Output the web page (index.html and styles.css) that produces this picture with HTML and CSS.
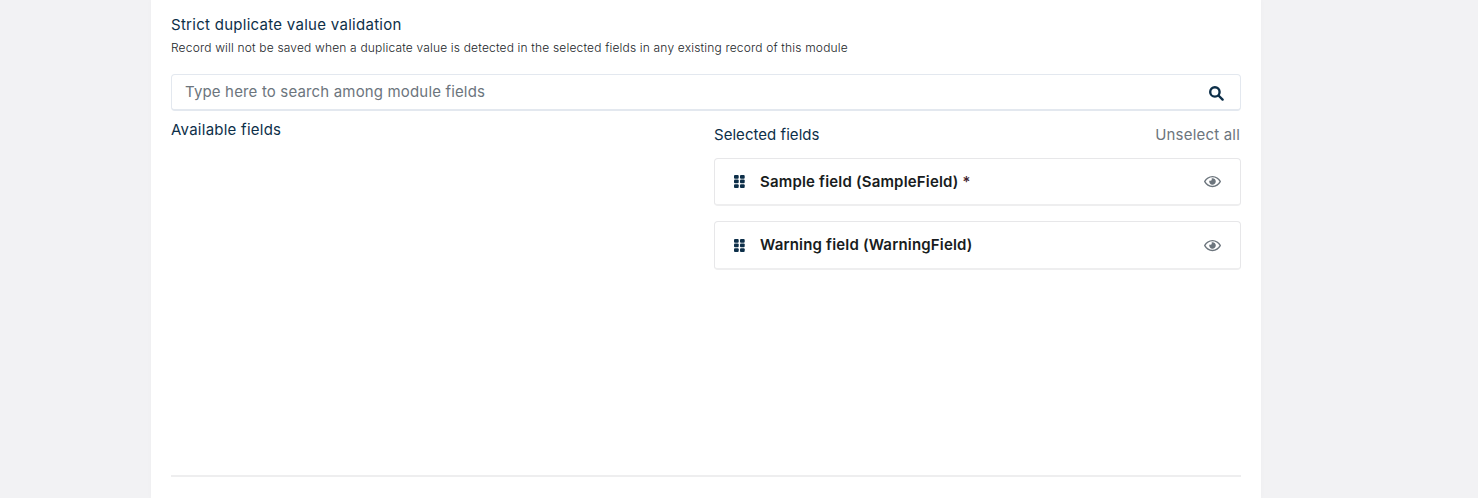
FILE: index.html
```html
<!DOCTYPE html>
<html lang="en">
<head>
<meta charset="utf-8">
<title>Strict duplicate value validation</title>
<link rel="stylesheet" href="styles.css">
</head>
<body>
<svg class="sprite" aria-hidden="true">
  <symbol id="grip" viewBox="0 0 11 13">
    <rect x="0" y="0" width="4.7" height="3.7" rx="1"/><rect x="6" y="0" width="4.7" height="3.7" rx="1"/>
    <rect x="0" y="4.6" width="4.7" height="3.7" rx="1"/><rect x="6" y="4.6" width="4.7" height="3.7" rx="1"/>
    <rect x="0" y="9.2" width="4.7" height="3.7" rx="1"/><rect x="6" y="9.2" width="4.7" height="3.7" rx="1"/>
  </symbol>
  <symbol id="eye" viewBox="0 0 576 512">
    <path d="M288 144a110.94 110.94 0 0 0-31.24 5 55.4 55.4 0 0 1 7.24 27 56 56 0 0 1-56 56 55.4 55.4 0 0 1-27-7.24A111.71 111.71 0 1 0 288 144zm284.52 97.4C518.29 135.59 410.93 64 288 64S57.68 135.64 3.48 241.41a32.35 32.35 0 0 0 0 29.19C57.71 376.41 165.07 448 288 448s230.32-71.64 284.52-177.41a32.35 32.35 0 0 0 0-29.19zM288 400c-98.65 0-189.09-55-237.93-144C98.91 167 189.34 112 288 112s189.09 55 237.93 144C477.1 345 386.66 400 288 400z"/>
  </symbol>
</svg>
<main class="panel">
  <h1 class="title">Strict duplicate value validation</h1>
  <p class="hint">Record will not be saved when a duplicate value is detected in the selected fields in any existing record of this module</p>
  <div class="search">
    <span class="placeholder">Type here to search among module fields</span>
    <svg class="search-icon" viewBox="0 0 15 15"><circle cx="5.9" cy="5.9" r="4.7"/><path d="M9.5 9.5 13.6 13.6"/></svg>
  </div>
  <div class="columns">
    <section class="available"><h2 class="label available-label">Available fields</h2></section>
    <section class="selected">
      <div class="head"><h2 class="label selected-label">Selected fields</h2><span class="label unselect">Unselect all</span></div>
      <div class="field"><svg class="grip"><use href="#grip"/></svg><span class="name sample">Sample field (SampleField) <span class="star">*</span></span><svg class="eye"><use href="#eye"/></svg></div>
      <div class="field second"><svg class="grip"><use href="#grip"/></svg><span class="name warning">Warning field (WarningField)</span><svg class="eye"><use href="#eye"/></svg></div>
    </section>
  </div>
</main>
</body>
</html>
```
FILE: styles.css
```css
* { box-sizing: border-box; }
body { margin: 0; height: 498px; overflow: hidden; background: #f2f2f4; font-family: Inter, "Open Sans", sans-serif; color: #0d2f49; }
.sprite { display: none; }
h1, h2, p { margin: 0; font-weight: 400; white-space: nowrap; }
.panel { width: 1110px; height: 498px; margin-left: 151px; padding: 14px 20px 0; background: #fff; box-shadow: 0 0 6px rgba(0, 0, 0, .025); }
.title { font-size: 15px; line-height: 22px; letter-spacing: .28px; }
.hint { margin-top: 2px; font-size: 12px; line-height: 20px; font-weight: 300; letter-spacing: .17px; color: #212529; }
.search { display: flex; align-items: center; justify-content: space-between; height: 37px; margin-top: 16px; padding: 0 16px 0 13px; border: 1px solid #e3e8ef; border-bottom-width: 2px; border-radius: 4px; }
.placeholder { font-size: 15px; line-height: 22px; letter-spacing: .16px; color: #6c757d; white-space: nowrap; }
.search-icon { width: 15px; height: 15px; margin-top: 3px; fill: none; stroke: #0d2f49; stroke-width: 2.4; stroke-linecap: round; }
.columns { display: grid; grid-template-columns: 543px 527px; height: 366px; border-bottom: 2px solid #eeeeef; }
.label { font-size: 15px; line-height: 22px; white-space: nowrap; }
.available { padding-top: 8px; }
.available-label { letter-spacing: .25px; }
.selected { padding-top: 13px; }
.selected-label { letter-spacing: .04px; }
.head { display: flex; justify-content: space-between; height: 34px; }
.unselect { letter-spacing: .2px; color: #6c757d; padding-right: 1px; }
.field { display: flex; align-items: center; height: 48px; padding: 0 19px; border: 1px solid #e7e7e9; border-bottom: 2px solid #eeeeef; border-radius: 4px; }
.second { margin-top: 15px; height: 49px; }
.grip { width: 11px; height: 13px; margin-right: 15px; fill: #0d2f49; }
.name { flex: 1; font-size: 15px; line-height: 22px; font-weight: 600; letter-spacing: .18px; color: #181c20; white-space: nowrap; }
.star { font-weight: 500; color: #40222c; }
.eye { width: 17px; height: 15px; fill: #6c757d; }
```
